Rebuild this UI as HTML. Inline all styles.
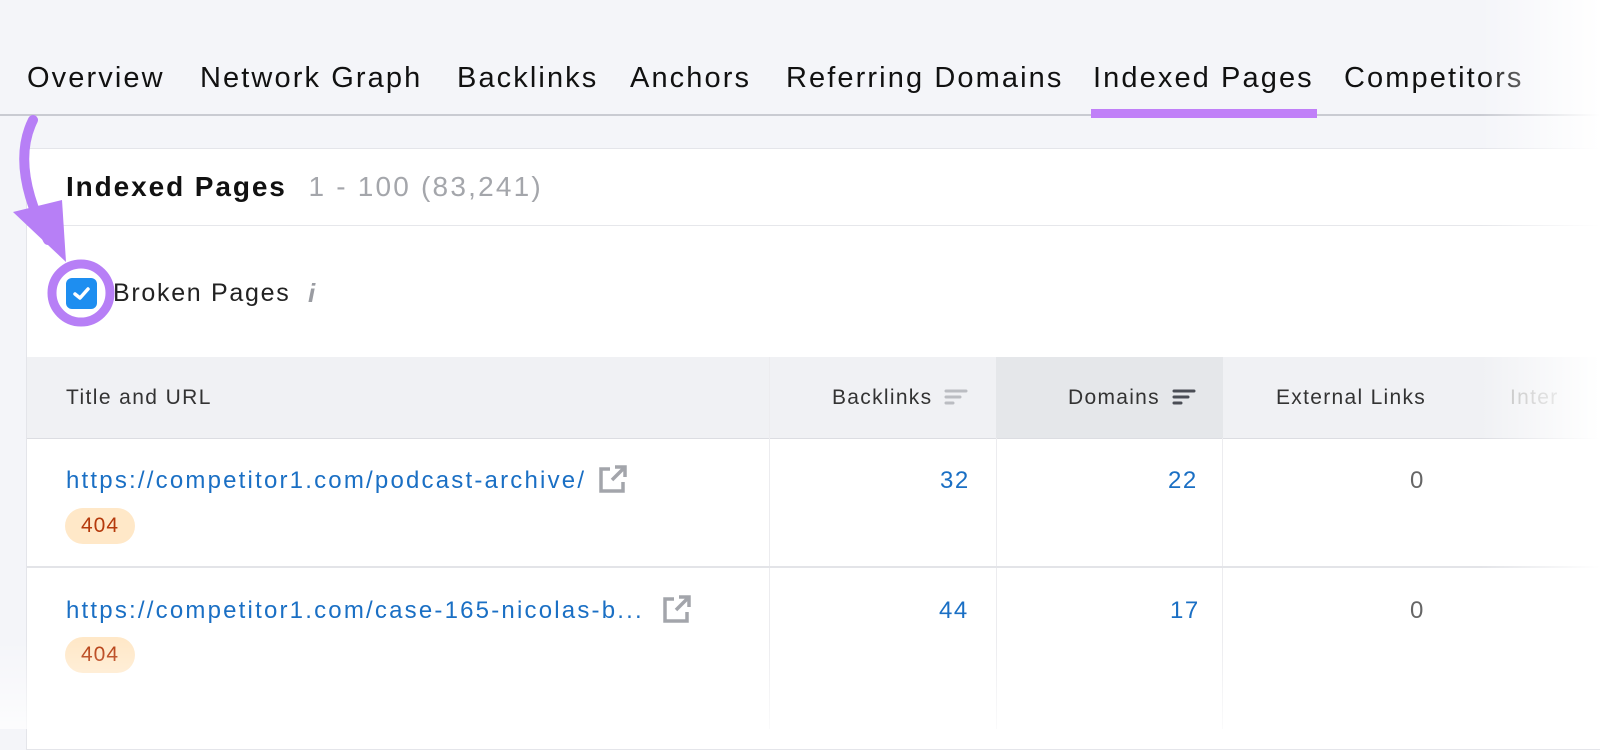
<!DOCTYPE html><html><head><style>
body{margin:0;width:1600px;height:729px;overflow:hidden;background:#f4f5f9;font-family:"Liberation Sans",sans-serif;position:relative}
.tabs{position:absolute;top:62px;left:27px;font-size:29px;letter-spacing:2.1px;color:#111;white-space:nowrap}
.tabs span{position:absolute;top:0}
.line{position:absolute;top:114px;left:0;width:1600px;height:2px;background:#c9cbd2}
.ul{position:absolute;top:109px;left:1091px;width:226px;height:9px;background:#c07ff8}
.card{position:absolute;left:26px;top:148px;width:1600px;height:600px;background:#fff;border:1px solid #e4e5ea}
.a{position:absolute;white-space:nowrap}
.th{position:absolute;top:357px;left:27px;width:1600px;height:81px;background:#f0f1f4;border-bottom:1px solid #dcdde2}
.blue{color:#1a6fc4}
.vl{position:absolute;width:1px;background:#ececef}
.badge{position:absolute;background:#ffe8c8;color:#b53a0c;font-size:21px;letter-spacing:1px;border-radius:18px;padding:6px 16px}
.url{font-size:24px;letter-spacing:2.2px}
.num{font-size:24px;letter-spacing:1.5px}
</style></head><body>
<div class="tabs">
<span style="left:0">Overview</span><span style="left:173px">Network Graph</span><span style="left:430px">Backlinks</span><span style="left:603px">Anchors</span><span style="left:759px">Referring Domains</span><span style="left:1066px">Indexed Pages</span><span style="left:1317px">Competitors</span>
</div>
<div class="line"></div><div class="ul"></div>
<div class="card"></div>
<div class="a" style="left:66px;top:171px;font-size:28px;font-weight:bold;color:#111;letter-spacing:1.9px">Indexed Pages <span style="font-weight:normal;color:#a4a6ab;margin-left:12px;letter-spacing:2.2px">1 - 100 (83,241)</span></div>
<div style="position:absolute;left:27px;top:225px;width:1600px;height:1px;background:#e6e7eb"></div>
<div style="position:absolute;left:66px;top:278px;width:31px;height:31px;border-radius:6px;background:#1e8ef0"></div>
<svg style="position:absolute;left:66px;top:278px" width="31" height="31"><path d="M9 16l5 4 8-9" stroke="#fff" stroke-width="3.5" fill="none" stroke-linecap="round" stroke-linejoin="round"/></svg>
<div class="a" style="left:113px;top:279px;font-size:25px;letter-spacing:1.7px;color:#222">Broken Pages</div>
<div class="a" style="left:308px;top:278px;font-size:26px;color:#9a9ca2;font-style:italic;font-weight:bold">i</div>
<div class="th"></div>
<div style="position:absolute;left:996px;top:357px;width:227px;height:81px;background:#e5e7ea"></div>
<div class="a" style="left:66px;top:386px;font-size:21px;letter-spacing:1.4px;color:#333">Title and URL</div>
<div class="a" style="left:832px;top:386px;font-size:21px;letter-spacing:1.3px;color:#333">Backlinks</div>
<svg style="position:absolute;left:944px;top:388px" width="24" height="20"><path d="M2 3h20M2 9h14M2 15h7" stroke="#bbbdc2" stroke-width="3" stroke-linecap="round"/></svg>
<div class="a" style="left:1068px;top:386px;font-size:21px;letter-spacing:1.3px;color:#333">Domains</div>
<svg style="position:absolute;left:1172px;top:388px" width="24" height="20"><path d="M2 3h20M2 9h14M2 15h7" stroke="#4a4d55" stroke-width="3" stroke-linecap="round"/></svg>
<div class="a" style="left:1276px;top:386px;font-size:21px;letter-spacing:1.3px;color:#333">External Links</div>
<div class="a" style="left:1510px;top:386px;font-size:21px;letter-spacing:1.3px;color:#bbb">Inter</div>
<div class="vl" style="left:769px;top:357px;height:372px"></div>
<div class="vl" style="left:996px;top:438px;height:291px"></div>
<div class="vl" style="left:1222px;top:438px;height:291px"></div>
<div style="position:absolute;left:27px;top:566px;width:1600px;height:2px;background:#e3e4e8"></div>
<div class="a blue url" style="left:66px;top:467px">https://competitor1.com/podcast-archive/</div>
<svg style="position:absolute;left:598px;top:464px" width="30" height="30"><path d="M12 5H3v22h22v-9" stroke="#a3a5ab" stroke-width="3.5" fill="none"/><path d="M14 16L26 4M17 3h10v10" stroke="#a3a5ab" stroke-width="3.5" fill="none"/></svg>
<div class="badge" style="left:65px;top:508px">404</div>
<div class="a blue num" style="left:940px;top:467px">32</div>
<div class="a blue num" style="left:1168px;top:467px">22</div>
<div class="a num" style="left:1410px;top:467px;color:#666">0</div>
<div class="a blue url" style="left:66px;top:597px">https://competitor1.com/case-165-nicolas-b...</div>
<svg style="position:absolute;left:662px;top:594px" width="30" height="30"><path d="M12 5H3v22h22v-9" stroke="#a3a5ab" stroke-width="3.5" fill="none"/><path d="M14 16L26 4M17 3h10v10" stroke="#a3a5ab" stroke-width="3.5" fill="none"/></svg>
<div class="badge" style="left:65px;top:637px">404</div>
<div class="a blue num" style="left:939px;top:597px">44</div>
<div class="a blue num" style="left:1170px;top:597px">17</div>
<div class="a num" style="left:1410px;top:597px;color:#666">0</div>
<div style="position:absolute;left:1480px;top:0;width:120px;height:729px;background:linear-gradient(to right,rgba(255,255,255,0),#fff)"></div>
<div style="position:absolute;left:0;top:640px;width:1600px;height:89px;background:linear-gradient(to bottom,rgba(255,255,255,0),rgba(255,255,255,.75))"></div>
<svg style="position:absolute;left:0;top:0" width="140" height="340">
<path d="M33 120 C18 150 22 190 48 240" stroke="#b77ff6" stroke-width="10" fill="none" stroke-linecap="round"/>
<path d="M13 212 L66 262 L62 200 Z" fill="#b77ff6"/>
<circle cx="81" cy="293" r="29" stroke="#b77ff6" stroke-width="9" fill="none"/>
</svg>
</body></html>
